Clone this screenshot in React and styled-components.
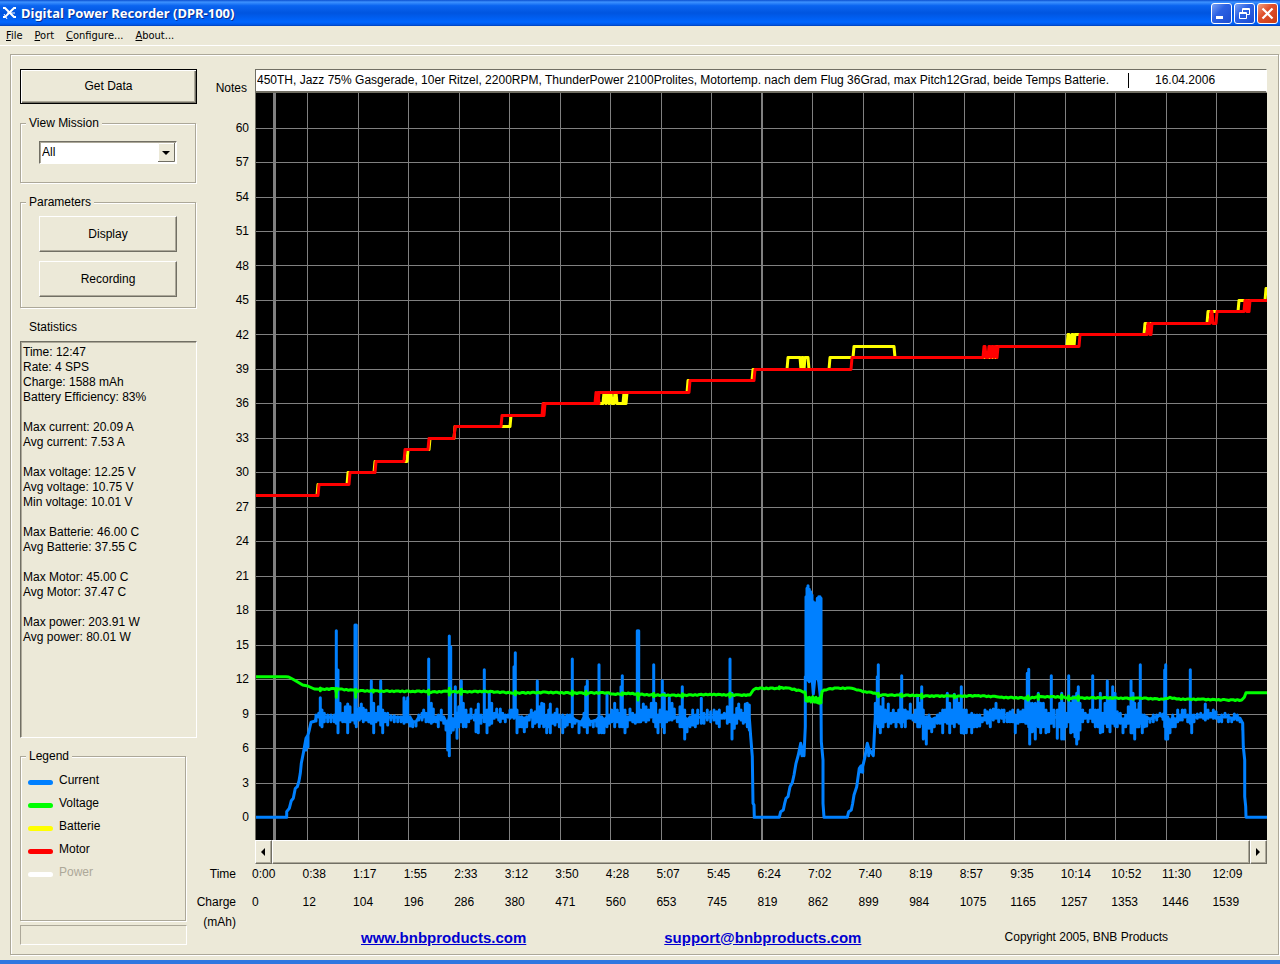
import { useState } from 'react';
import styled, { createGlobalStyle } from 'styled-components';

const stats = [
  ['Time: 12:47', 'Rate: 4 SPS', 'Charge: 1588 mAh', 'Battery Efficiency: 83%'],
  ['Max current: 20.09 A', 'Avg current: 7.53 A'],
  ['Max voltage: 12.25 V', 'Avg voltage: 10.75 V', 'Min voltage: 10.01 V'],
  ['Max Batterie: 46.00 C', 'Avg Batterie: 37.55 C'],
  ['Max Motor: 45.00 C', 'Avg Motor: 37.47 C'],
  ['Max power: 203.91 W', 'Avg power: 80.01 W'],
];

const channels = [
  { name: 'Current', color: '#0080ff' },
  { name: 'Voltage', color: '#00ff00' },
  { name: 'Batterie', color: '#ffff00' },
  { name: 'Motor', color: '#ff0000' },
  { name: 'Power', color: '#ffffff', off: true },
];

const scale = [60, 57, 54, 51, 48, 45, 42, 39, 36, 33, 30, 27, 24, 21, 18, 15, 12, 9, 6, 3, 0];

const times = [
  '0:00', '0:38', '1:17', '1:55', '2:33', '3:12', '3:50', '4:28', '5:07', '5:45',
  '6:24', '7:02', '7:40', '8:19', '8:57', '9:35', '10:14', '10:52', '11:30', '12:09',
];

const charges = [
  0, 12, 104, 196, 286, 380, 471, 560, 653, 745, 819, 862, 899, 984, 1075, 1165, 1257, 1353, 1446, 1539,
];

// ---- recorded traces -------------------------------------------------
// Two numbers are a plain point, three numbers are a sample with its
// highest and lowest reading. Every run counts in thirds from its origin.
const currentRuns = [
  {
    origin: 256,
    data: `0 772;92 772;92 755;100 745;106 722;112 715;118 685;124 680;129 663;133 640;136 610;142 580;
150 535 570;156 525 560;160 510;165 487;178 483;180 465 483;188 460 470;193 413 495;198 450 500;205 460 485;
215 465 485;225 465 485;235 465 485;241 212 490;246 330 518;252 430 480;260 460 485;268 440 485;275 432 518;
282 440 485;290 465 480;297 195 490;301 195 500;310 445 480;316 432 475;322 445 485;330 450 480;338 460 485;
346 363 490;353 430 518;360 460 485;367 440 480;374 363 495;380 450 518;387 460 485;395 460 495;405 467 480;
415 467 485;425 470 485;435 470 485;444 413 490;450 425 485;455 413 485;462 470 498;470 485 500;480 485 498;
488 465 480;498 460 480;503 450 470;510 460 485;518 297 485;526 430 490;532 447 485;540 470 485;547 465 500;
556 450 480;563 470 490;570 485 510;575 490 570;580 228 587;584 260 518;592 480 510;598 380 500;603 460 535;
608 440 500;616 363 485;622 430 500;630 450 500;638 465 485;645 447 475;655 465 480;660 450 515;667 432 518;
675 465 490;685 329 485;693 450 518;700 400 495;707 430 490;715 460 475;722 447 470;728 465 480;733 447 485;
740 460 475;748 465 485;755 465 470;762 450 475`,
  },
  {
    origin: 510,
    data: `5 450 470;12 320 475;16 278 470;21 450 518;28 470 500;35 470 500;43 475 515;50 470 500;58 465 480;
64 450 470;68 460 500;75 455 490;82 363 485;88 440 500;95 430 490;101 432 500;110 465 518;116 450 500;
121 432 518;128 465 490;135 460 495;141 447 485;148 465 500;158 465 518;165 470 500;172 465 495;180 465 485;
187 297 500;195 480 490;207 485 518;215 485 495;222 460 500;227 380 500;232 363 518;240 485 495;250 483 500;
260 480 498;267 314 518;275 470 518;282 480 518;291 403 500;298 465 490;305 450 485;314 430 500;322 450 485;
329 460 500;333 380 490;337 347 500;345 450 518;352 470 500;360 447 480;368 460 485;376 465 490;382 212 485;
386 212 485;392 450 485;400 432 480;408 440 485;416 450 480;424 430 470;431 314 485;437 430 500;444 465 518;
450 450 485;457 362 500;463 400 518;470 455 485;478 413 480;486 430 480;493 447 475;502 470 485;510 440 500;
517 380 500;524 450 537;531 480 515;540 470 500;548 450 495;556 465 500;563 450 490;574 415 490;582 460 490;
592 450 480;602 455 485;612 450 480;620 455 490;628 450 500;636 465 475;643 460 475;652 440 490;660 297 485;
666 400 537;673 465 505;680 445 490;686 432 475;693 450 480;700 460 490;706 432 485;712 430 500;718 435 510;
722 530;727 590;729 730;732 735;733 772`,
  },
  {
    origin: 750,
    data: `12 772;88 772;92 755;100 750;104 730;108 715;114 710;120 680;127 668;132 645;138 610;145 585;
152 550 580;156 565 587;162 587;166 500;166 350;168 110 350;171 85 355;174 77 360;178 88 365;182 95 350;
186 105 350;190 125 402;194 130 360;198 128 350;202 115 350;206 110 365;210 110 400;213 115 430;214 545;
219 600;219 730;222 772;292 772;296 755;304 750;308 730;312 705;320 680;328 625;333 618 635;338 620 637;
345 590;352 550 575;356 565 587;370 587;374 500;376 430 480;382 350 490;385 314 500;391 440 518;399 415 500;
406 450 485;415 432 500;423 460 490;430 450 485;438 460 500;446 450 485;452 400 490;455 347 500;460 450 485;
466 450 500;473 455 475;481 432 475;489 465 480;496 450 485;503 413 500;509 430 500;515 380 490;520 450 537;
529 470 552;537 465 505;545 480 515;553 475 500;562 465 490;570 460 490;578 450 518;585 450 485;592 400 490;
599 430 518;606 450 490;613 403 500;620 415 485;627 430 490;634 380 518;641 450 520;649 450 518;657 465 500;
665 460 518;673 465 500;681 465 500;689 465 498;697 475 485;705 450 480;712 455 490;721 450 500;730 447 480;
738 430 475;746 450 485;755 450 475`,
  },
  {
    origin: 1000,
    data: `12 450 485;22 460 485;30 455 485;38 450 485;46 465 518;54 450 490;62 455 485;69 450 485;77 420 490;
82 340 490;86 328 500;89 430 552;97 430 515;106 430 537;115 400 500;122 430 518;130 430 500;138 450 518;
146 460 515;154 347 490;162 450 500;172 450 535;179 430 500;185 400 537;192 430 537;199 460 500;206 347 485;
212 430 518;219 410 515;225 410 530;230 400 552;235 380 537;240 430 510;248 450 485;256 460 475;264 465 485;
271 450 475;278 347 485;286 450 500;294 450 500;301 400 518;308 460 515;315 430 490;322 363 500;330 413 515;
338 380 490;345 400 498;352 455 500;361 460 490;369 480 518;377 465 500;385 440 490;393 362 518;399 400 518;
404 430 537;411 450 500;417 430 500;421 314 490;427 465 518;433 465 500;440 470 498;450 478 487;460 465 485;
470 465 480;480 460 465;489 462 478;494 330 500;497 314 537;503 470 537;510 485 518;518 465 500;526 480 500;
533 450 485;540 465 480;547 450 480;555 450 470;563 465 485;571 329 490;575 465 518;582 465 485;592 462 475;
602 460 470;610 465 475;616 432 480;624 450 475;632 460 470;640 450 475;648 455 475;656 470 485;665 465 485;
675 460 470;685 465 485;695 475 485;703 462 478;712 465 480;720 475 485;728 490 510;730 560;734 600;734 710;
737 740;738 772;806 772`,
  },
];

const voltageRuns = [
  {
    origin: 256,
    data: `0 350;90 350;98 351;115 360;140 375;155 378;175 387;193 384 392;238 386;241 385 412;245 387;
297 391;299 388 412;302 392;352 390 396;470 394;516 394;518 390 403;575 394;580 385 405;616 388 403;
690 394;720 396`,
  },
  {
    origin: 510,
    data: `0 398;16 394 404;110 397;187 393 405;228 394 404;290 398;310 402;337 398 405;355 399;380 402;
384 400 420;390 403;431 400 410;517 401 411;600 403;660 399 411;690 405;720 405;730 390;738 385;800 385`,
  },
  {
    origin: 750,
    data: `85 384;88 380 386;120 385;165 396;168 410 422;173 414 424;178 412 422;183 414 426;188 410 422;
193 414 426;198 412 426;203 416 428;208 414 430;213 408 428;216 395;222 390;235 387;265 384;305 385;
320 390;345 395;375 399;385 400 410;420 405;455 402 410;500 406;515 402 414;600 408;613 405 413;680 407;
740 410`,
  },
  {
    origin: 1000,
    data: `0 412;84 408 420;115 404 418;130 410;185 405 416;206 408 420;235 408 421;300 413;400 413 418;
420 414;490 418;510 412;530 417;600 418;680 420;725 420;733 412;738 398;806 398`,
  },
];

// temperature steps as x and degrees
const batterie = `255 28;318 29;348 30;375 31;408 32;430 33;455 34;511 35;544 36;604 37;606 36;607 37;609 36;
610 37;612 36;615 37;617 36;624 37;625 36;627 37;688 38;753 39;788 40;801 39;802 40;804 39;805 40;809 39;
830 40;854 41;895 40;997 41;1068 42;1070 41;1072 42;1074 41;1075 42;1145 43;1208 44;1239 45;1266 46;1268 46`;

const motor = `255 28;319 29;350 30;376 31;405 32;429 33;455 34;502 35;543 36;544 35;545 36;596 37;597 36;
598 37;599 36;599 37;690 38;755 39;852 40;984 41;986 40;989 41;991 40;992 41;994 40;995 41;997 40;998 41;
1080 42;1148 43;1150 42;1152 43;1211 44;1213 43;1217 44;1245 45;1247 44;1248 45;1249 44;1250 45;1268 45`;

const numbers = (text) => text.split(';').map((s) => s.trim().split(' ').map(Number));

function runsToPoints(runs, middle) {
  const points = [];
  runs.forEach(({ origin, data }) => {
    numbers(data).forEach(([x, a, b]) => {
      const px = origin + x / 3;
      const add = (y) => points.push([px, 560 + y / 3]);
      if (b === undefined) {
        add(a);
        return;
      }
      const rest = Math.min(Math.max(middle ?? (a + b) / 2, a), b);
      add(rest);
      add(a);
      add(b);
      add(rest);
    });
  });
  return points;
}

// small ripple on long flat pieces
function ripple(points) {
  const out = [];
  points.forEach((p, i) => {
    out.push(p);
    const next = points[i + 1];
    if (!next || p[0] < 320 || p[0] > 1240) return;
    const n = Math.floor((next[0] - p[0]) / 2);
    for (let k = 1; k < n; k++) {
      const t = k / n;
      out.push([p[0] + (next[0] - p[0]) * t, p[1] + (next[1] - p[1]) * t + ((k * 7 + i * 3) % 5 > 2 ? 0.5 : -0.3)]);
    }
  });
  return out;
}

const degreesToY = (v) => Math.round(817 - v * 11.49) + 0.5;

function stepsToPoints(text) {
  const points = [];
  let last = null;
  numbers(text).forEach(([x, v]) => {
    if (last !== null) points.push([x - 1, degreesToY(last)]);
    points.push([x, degreesToY(v)]);
    last = v;
  });
  return points;
}

const join = (points) => points.map(([x, y]) => `${x.toFixed(1)},${y.toFixed(1)}`).join(' ');

const GlobalStyle = createGlobalStyle`
  * {
    box-sizing: border-box;
  }
  body {
    margin: 0;
    background: #ece9d8;
    color: #000;
    font: 12px/15px "Liberation Sans", Arial, sans-serif;
  }
  button, input, select {
    font: inherit;
    color: inherit;
  }
`;

const Window = styled.div`
  display: flex;
  flex-direction: column;
  min-height: 100vh;
  border-bottom: 4px solid #2f77e0;
`;

const TitleBar = styled.header`
  display: flex;
  align-items: center;
  gap: 4px;
  height: 26px;
  padding: 0 2px;
  color: #fff;
  background: linear-gradient(#0a4fd0 0%, #3d92ff 8%, #0a64f0 22%, #0055e0 50%, #0066ff 85%, #0058e8 94%, #0040b8 100%);

  h1 {
    flex: 1;
    margin: 0;
    font: bold 13px/20px "Noto Sans", sans-serif;
    text-shadow: 1px 1px 0 #0a2f90;
  }
`;

const CaptionButtons = styled.div`
  display: flex;
  gap: 2px;
`;

const CaptionButton = styled.button`
  display: flex;
  width: 21px;
  height: 21px;
  padding: 0;
  border: 1px solid #fff;
  border-radius: 3px;
  background: ${(p) =>
    p.$close
      ? 'linear-gradient(135deg, #f0a080, #e0502c 40%, #c83c14)'
      : 'linear-gradient(135deg, #7ba2f4, #2c62e4 40%, #1c4cd0)'};
`;

const MenuBar = styled.nav`
  display: flex;
  gap: 12px;
  height: 20px;
  padding: 0 6px;
  border-bottom: 1px solid #fff;
  font: 11px/18px "DejaVu Sans Condensed", "DejaVu Sans", sans-serif;
`;

const MenuItem = styled.button`
  padding: 0;
  border: 0;
  background: none;

  &::first-letter {
    text-decoration: underline;
  }
`;

const Frame = styled.main`
  flex: 1;
  display: flex;
  margin: 8px 1px 5px 10px;
  padding: 14px 11px 7px 9px;
  border: 1px solid #aca899;
  box-shadow: inset 1px 1px 0 #fff, 1px 1px 0 #fff;
`;

const Sidebar = styled.aside`
  display: flex;
  flex-direction: column;
  flex: 0 0 177px;
  padding-bottom: 2px;
`;

const PushButton = styled.button`
  height: ${(p) => (p.$default ? '35px' : '36px')};
  padding: 0;
  border: 1px solid;
  border-color: ${(p) => (p.$default ? '#000' : '#fff #716f64 #716f64 #fff')};
  background: #ece9d8;
  box-shadow: ${(p) =>
    p.$default
      ? 'inset 1px 1px 0 #fff, inset -1px -1px 0 #716f64, inset -2px -2px 0 #aca899'
      : 'inset -1px -1px 0 #aca899'};
`;

const Group = styled.fieldset`
  min-width: 0;
  margin: ${(p) => (p.$narrow ? '10px 11px 0 0' : '11px 1px 0 0')};
  padding: 0;
  border: 1px solid #aca899;
  box-shadow: inset 1px 1px 0 #fff, 1px 1px 0 #fff;

  legend {
    margin-left: 5px;
    padding: 0 3px;
    background: #ece9d8;
    line-height: 16px;
  }
`;

const GroupBody = styled.div`
  display: flex;
  flex-direction: column;
  gap: 9px;
  padding: ${(p) => (p.$tight ? '6px' : '10px')} 18px ${(p) => (p.$tight ? '10px' : '18px')};
`;

const Combo = styled.div`
  position: relative;
  display: flex;

  select {
    flex: 1;
    height: 23px;
    padding: 0 0 0 2px;
    appearance: none;
    border: 1px solid;
    border-color: #716f64 #fff #fff #716f64;
    border-radius: 0;
    background: #fff;
    box-shadow: inset 1px 1px 0 #aca899;
  }

  svg {
    position: absolute;
    top: 2px;
    right: 2px;
    background: #ece9d8;
    pointer-events: none;
  }
`;

const StatsTitle = styled.h2`
  margin: 12px 0 6px 9px;
  font: inherit;
`;

const StatsBox = styled.section`
  flex: 1;
  padding: 3px 2px;
  border: 1px solid;
  border-color: #716f64 #fff #fff #716f64;
  box-shadow: inset 1px 1px 0 #aca899;

  p {
    margin: 0 0 15px;
    white-space: pre-line;
  }
`;

const LegendList = styled.ul`
  height: 156px;
  margin: 0;
  padding: 5px 7px;
  list-style: none;
`;

const LegendItem = styled.li`
  display: flex;
  align-items: center;
  gap: 6px;
  height: 23px;
  color: ${(p) => (p.$off ? '#aca899' : '#000')};
`;

const Swatch = styled.span`
  width: 25px;
  height: 5px;
  margin-top: 4px;
  border-radius: 3px;
  background: ${(p) => p.$color};
`;

const StatusSlot = styled.div`
  height: 20px;
  margin: 4px 10px 0 0;
  border: 1px solid;
  border-color: #aca899 #fff #fff #aca899;
`;

const Recorder = styled.div`
  flex: 1;
  min-width: 0;
  display: flex;
  flex-direction: column;
`;

const PlotRow = styled.div`
  flex: ${(p) => (p.$grow ? 1 : 'none')};
  display: grid;
  grid-template-columns: 58px 1fr;
`;

const NotesLabel = styled.label`
  height: 24px;
  padding: 12px 8px 0 0;
  text-align: right;
`;

const NotesBox = styled.div`
  display: flex;
  align-items: center;
  height: 24px;
  border: 1px solid;
  border-color: #716f64 #fff #716f64 #716f64;
  border-bottom-width: 2px;
  background: #fff;

  input {
    height: 15px;
    padding: 0 0 0 1px;
    border: 0;
    outline: 0;
    background: none;
  }
`;

const NotesInput = styled.input`
  flex: 1;
  min-width: 0;

  && {
    border-right: 1px solid #000;
  }
`;

const DateInput = styled.input`
  width: 112px;
  margin-left: 25px;
`;

const ScaleColumn = styled.ol`
  display: flex;
  flex-direction: column;
  margin: 0;
  padding: 18px 6px 5px 0;
  list-style: none;
  text-align: right;

  li {
    flex: 1;
    display: flex;
    align-items: center;
    justify-content: flex-end;
  }
`;

const PlotArea = styled.div`
  display: flex;
  contain: size;
  min-height: 480px;
  border-left: 1px solid #716f64;
  background: #000;

  svg {
    flex: 1;
    min-width: 0;
    height: 100%;
  }
`;

const ScrollBar = styled.div`
  display: flex;
  grid-column: 2;
  height: 24px;
`;

const ScrollPiece = styled.button`
  flex: ${(p) => (p.$thumb ? 1 : '0 0 17px')};
  display: flex;
  align-items: center;
  justify-content: center;
  padding: 0;
  border: 1px solid;
  border-color: #fff #716f64 #716f64 #fff;
  background: #ece9d8;
  box-shadow: inset -1px -1px 0 #aca899;
`;

const AxisRow = styled.div`
  display: grid;
  grid-template-columns: 55px 1fr;
  padding-right: 4px;
`;

const AxisLabels = styled.div`
  display: flex;
  flex-direction: column;
  align-items: flex-end;
  padding: 0 16px 15px 0;
  line-height: 20px;

  span:first-child {
    margin-bottom: 8px;
  }
`;

const Ticks = styled.ol`
  display: grid;
  grid-template-columns: repeat(20, 1fr);
  margin: 0 0 8px;
  padding: 0;
  list-style: none;
  line-height: 20px;
`;

const Footer = styled.footer`
  display: flex;
  align-items: center;
  height: 20px;
  margin-top: 15px;
  padding: 0 95px 0 109px;
`;

const SiteLink = styled.a`
  margin-right: 138px;
  color: #0000d0;
  font-size: 15px;
  font-weight: bold;

  & + & {
    margin-right: 0;
  }
`;

const Copyright = styled.span`
  margin-left: auto;
`;

function PlaneIcon() {
  return (
    <svg width="15" height="16" viewBox="0 0 15 16" fill="none" stroke="#fff">
      <path d="M1 3h2l3 3 3 3 3 3h2" strokeWidth="2" />
      <path d="M14 3h-2L8 7l-5 5H1" strokeWidth="2" />
      <path d="M2 9l3 5M9 8h4M5 8h3" strokeWidth="1" />
    </svg>
  );
}

function Trace({ points, color }) {
  return (
    <polyline
      points={join(points)}
      fill="none"
      stroke={color}
      strokeWidth="3"
      strokeLinejoin="round"
      vectorEffect="non-scaling-stroke"
    />
  );
}

function Plot() {
  return (
    <svg viewBox="256 93 1011 747" preserveAspectRatio="none" role="img" aria-label="Flight recording">
      <g stroke="#808080" shapeRendering="crispEdges">
        {scale.map((v) => (
          <line key={v} x1="256" x2="1267" y1={degreesToY(v)} y2={degreesToY(v)} />
        ))}
        {times.slice(1).map((t, i) => {
          const x = Math.floor(307.5 + i * 50.5) + (i === 9 ? 0 : 0.5);
          return <line key={t} x1={x} x2={x} y1="93" y2="840" strokeWidth={i === 9 ? 2 : 1} />;
        })}
        <line x1="274.5" x2="274.5" y1="93" y2="840" strokeWidth="3" />
      </g>
      <Trace points={runsToPoints(currentRuns, 472)} color="#0080ff" />
      <Trace points={ripple(runsToPoints(voltageRuns))} color="#00ff00" />
      <Trace points={stepsToPoints(batterie)} color="#ffff00" />
      <Trace points={stepsToPoints(motor)} color="#ff0000" />
    </svg>
  );
}

function App() {
  const [notes, setNotes] = useState(
    '450TH, Jazz 75% Gasgerade, 10er Ritzel, 2200RPM, ThunderPower 2100Prolites, Motortemp. nach dem Flug 36Grad, max Pitch12Grad, beide Temps Batterie.'
  );
  const [date, setDate] = useState('16.04.2006');

  return (
    <Window>
      <GlobalStyle />
      <TitleBar>
        <PlaneIcon />
        <h1>Digital Power Recorder (DPR-100)</h1>
        <CaptionButtons>
          <CaptionButton aria-label="Minimize">
            <svg width="19" height="19" viewBox="0 0 19 19">
              <path d="M4 12h7v3H4z" fill="#fff" />
            </svg>
          </CaptionButton>
          <CaptionButton aria-label="Restore">
            <svg width="19" height="19" viewBox="0 0 19 19" fill="none" stroke="#fff">
              <path d="M7.5 8V4.5h7v6H12M7 5.5h8M4.5 8.5h7v6h-7zM4 9.5h8" />
            </svg>
          </CaptionButton>
          <CaptionButton $close aria-label="Close">
            <svg width="19" height="19" viewBox="0 0 19 19" stroke="#fff" strokeWidth="2.2">
              <path d="M4.5 4.5l10 10M14.5 4.5l-10 10" />
            </svg>
          </CaptionButton>
        </CaptionButtons>
      </TitleBar>

      <MenuBar>
        <MenuItem>File</MenuItem>
        <MenuItem>Port</MenuItem>
        <MenuItem>Configure...</MenuItem>
        <MenuItem>About...</MenuItem>
      </MenuBar>

      <Frame>
        <Sidebar>
          <PushButton $default>Get Data</PushButton>

          <Group>
            <legend>View Mission</legend>
            <GroupBody>
              <Combo>
                <select aria-label="View Mission" defaultValue="All">
                  <option>All</option>
                </select>
                <svg width="17" height="19" viewBox="0 0 17 19">
                  <path d="M.5 19V.5H17" fill="none" stroke="#fff" />
                  <path d="M0 18.5h16.5V0" fill="none" stroke="#716f64" />
                  <path d="M4 8h8l-4 4z" />
                </svg>
              </Combo>
            </GroupBody>
          </Group>

          <Group>
            <legend>Parameters</legend>
            <GroupBody $tight>
              <PushButton>Display</PushButton>
              <PushButton>Recording</PushButton>
            </GroupBody>
          </Group>

          <StatsTitle>Statistics</StatsTitle>
          <StatsBox>
            {stats.map((block) => (
              <p key={block[0]}>{block.join('\n')}</p>
            ))}
          </StatsBox>

          <Group $narrow>
            <legend>Legend</legend>
            <LegendList>
              {channels.map((c) => (
                <LegendItem key={c.name} $off={c.off}>
                  <Swatch $color={c.color} />
                  {c.name}
                </LegendItem>
              ))}
            </LegendList>
          </Group>
          <StatusSlot />
        </Sidebar>

        <Recorder>
          <PlotRow>
            <NotesLabel htmlFor="notes">Notes</NotesLabel>
            <NotesBox>
              <NotesInput id="notes" value={notes} onChange={(e) => setNotes(e.target.value)} />
              <DateInput aria-label="Date" value={date} onChange={(e) => setDate(e.target.value)} />
            </NotesBox>
          </PlotRow>

          <PlotRow $grow>
            <ScaleColumn>
              {scale.map((v) => (
                <li key={v}>{v}</li>
              ))}
            </ScaleColumn>
            <PlotArea>
              <Plot />
            </PlotArea>
          </PlotRow>

          <PlotRow>
            <ScrollBar>
              <ScrollPiece aria-label="Scroll left">
                <svg width="5" height="8" viewBox="0 0 5 8">
                  <path d="M4 0v8L0 4z" />
                </svg>
              </ScrollPiece>
              <ScrollPiece $thumb aria-label="Scroll position" />
              <ScrollPiece aria-label="Scroll right">
                <svg width="5" height="8" viewBox="0 0 5 8">
                  <path d="M0 0v8l4-4z" />
                </svg>
              </ScrollPiece>
            </ScrollBar>
          </PlotRow>

          <AxisRow>
            <AxisLabels>
              <span>Time</span>
              <span>Charge</span>
              <span>(mAh)</span>
            </AxisLabels>
            <div>
              <Ticks>
                {times.map((t) => (
                  <li key={t}>{t}</li>
                ))}
              </Ticks>
              <Ticks>
                {charges.map((c) => (
                  <li key={c}>{c}</li>
                ))}
              </Ticks>
              <Footer>
                <SiteLink href="http://www.bnbproducts.com">www.bnbproducts.com</SiteLink>
                <SiteLink href="mailto:support@bnbproducts.com">support@bnbproducts.com</SiteLink>
                <Copyright>Copyright 2005, BNB Products</Copyright>
              </Footer>
            </div>
          </AxisRow>
        </Recorder>
      </Frame>
    </Window>
  );
}

export default App;
